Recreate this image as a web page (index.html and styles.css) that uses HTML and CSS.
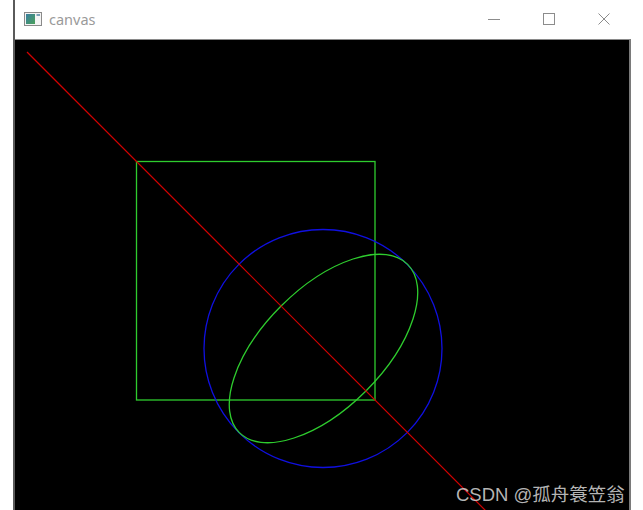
FILE: index.html
```html
<!DOCTYPE html>
<html>
<head>
<meta charset="utf-8">
<link rel="stylesheet" href="styles.css">
</head>
<body>
<div class="window">
  <div class="titlebar">
    <svg class="app-icon" width="18" height="14" viewBox="0 0 18 14">
      <defs>
        <linearGradient id="g" x1="0" y1="0" x2="1" y2="1">
          <stop offset="0" stop-color="#3a7fa0"/>
          <stop offset="1" stop-color="#4aa05a"/>
        </linearGradient>
      </defs>
      <rect x="0.5" y="0.5" width="17" height="13" fill="#f4f4f4" stroke="#8a8a8a"/>
      <rect x="2" y="2" width="9" height="10" fill="url(#g)"/>
      <rect x="12.5" y="2" width="3.5" height="2" fill="#7aa0b8"/>
    </svg>
    <span class="title">canvas</span>
    <div class="controls">
      <div class="ctl">
        <svg width="12" height="12" viewBox="0 0 12 12"><line x1="0" y1="6.5" x2="12" y2="6.5" stroke="#8c8c8c" stroke-width="1"/></svg>
      </div>
      <div class="ctl">
        <svg width="12" height="12" viewBox="0 0 12 12"><rect x="0.5" y="0.5" width="11" height="11" fill="none" stroke="#8c8c8c" stroke-width="1"/></svg>
      </div>
      <div class="ctl">
        <svg width="12" height="12" viewBox="0 0 12 12"><path d="M0.5 0.5 L11.5 11.5 M11.5 0.5 L0.5 11.5" stroke="#8c8c8c" stroke-width="1" fill="none"/></svg>
      </div>
    </div>
  </div>
  <div class="canvas">
    <svg class="drawing" viewBox="15 40 615 470" width="615" height="470">
      <rect x="136.5" y="161.5" width="238.5" height="238.5" fill="none" stroke="#2ecc2e" stroke-width="1.3"/>
      <circle cx="323" cy="348.5" r="119" fill="none" stroke="#1010e0" stroke-width="1.3"/>
      <ellipse cx="323.5" cy="348.5" rx="119" ry="60" transform="rotate(-45 323.5 348.5)" fill="none" stroke="#2ecc2e" stroke-width="1.3"/>
      <line x1="27" y1="52" x2="520" y2="545" stroke="#d40000" stroke-width="1.2"/>
    </svg>
    <div class="watermark">CSDN @孤舟簑笠翁</div>
  </div>
</div>
</body>
</html>
```
FILE: styles.css
```css
html, body {
  margin: 0;
  padding: 0;
  background: #ffffff;
  width: 643px;
  height: 510px;
  overflow: hidden;
}

.window {
  margin-left: 13px;
  width: 618px;
  height: 510px;
  display: flex;
  flex-direction: column;
  border-left: 2px solid #5a5a5a;
  box-sizing: border-box;
}

.titlebar {
  height: 39px;
  flex: none;
  display: flex;
  align-items: center;
  background: #ffffff;
}

.app-icon {
  margin-left: 9px;
  margin-top: -1px;
  flex: none;
}

.title {
  margin-left: 7px;
  font-family: "Noto Sans", "Open Sans", sans-serif;
  font-size: 14.5px;
  color: #9a9a9a;
  margin-top: -1px;
}

.controls {
  margin-left: auto;
  display: flex;
  height: 100%;
}

.ctl {
  width: 55px;
  display: flex;
  align-items: center;
  justify-content: center;
}

.ctl svg {
  display: block;
  margin-top: -1px;
}

.canvas {
  flex: 1;
  position: relative;
  background: #000000;
  border-top: 1px solid #8a8a8a;
  border-right: 2px solid #7a7a7a;
  overflow: hidden;
}

.drawing {
  display: block;
}

.watermark {
  position: absolute;
  left: 441px;
  top: 440px;
  font-family: "Liberation Sans", "Noto Sans CJK SC", sans-serif;
  font-size: 18.5px;
  color: rgba(215, 215, 215, 0.85);
  white-space: nowrap;
}
```
